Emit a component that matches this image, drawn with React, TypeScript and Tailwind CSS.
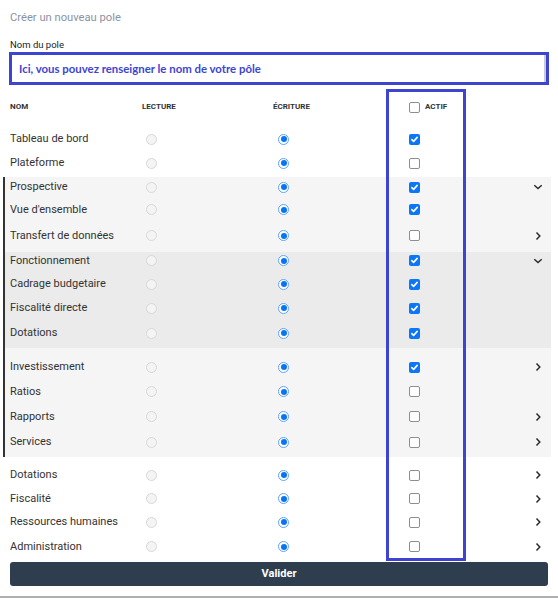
import React from "react";

type RowData = {
  name: string;
  checked: boolean;
  chev?: "right" | "down";
  h: string;
  extra?: string;
};

function Radio({ on }: { on: boolean }) {
  if (on)
    return (
      <span className="flex h-[11px] w-[11px] items-center justify-center rounded-full border-[1.5px] border-[#5fa3fa] bg-white">
        <span className="h-[6px] w-[6px] rounded-full bg-[#0a73f2]" />
      </span>
    );
  return <span className="block h-[11px] w-[11px] rounded-full border border-[#d8d8d8] bg-[#f4f4f4]" />;
}

function Check({ on }: { on: boolean }) {
  if (on)
    return (
      <span className="flex h-[11px] w-[11px] items-center justify-center rounded-[2px] bg-[#0b76f6]">
        <svg width="9" height="9" viewBox="0 0 9 9">
          <polyline points="1.8,4.6 3.6,6.4 7.2,2.4" fill="none" stroke="white" strokeWidth="1.6" strokeLinecap="round" strokeLinejoin="round" />
        </svg>
      </span>
    );
  return <span className="block h-[11px] w-[11px] rounded-[2px] border border-[#8e8e8e] bg-white" />;
}

function Chevron({ dir }: { dir: "right" | "down" }) {
  return (
    <svg width="10" height="10" viewBox="0 0 10 10">
      {dir === "right" ? (
        <polyline points="3.5,1.5 6.8,5 3.5,8.5" fill="none" stroke="#2b2b2b" strokeWidth="1.5" />
      ) : (
        <polyline points="1.3,3.3 5,6.6 8.7,3.3" fill="none" stroke="#2b2b2b" strokeWidth="1.5" />
      )}
    </svg>
  );
}

function Row({ r, inGroup }: { r: RowData; inGroup?: boolean }) {
  return (
    <div className={`flex items-center ${r.h} ${r.extra ?? ""} ${inGroup ? "pl-[5px]" : "pl-[10px]"}`}>
      <div className="w-[136px] text-[11px] leading-4 text-[#333]">{r.name}</div>
      <div className="w-[132px]">
        <Radio on={false} />
      </div>
      <div className="w-[131px]">
        <Radio on={true} />
      </div>
      <div className="w-[124px]">
        <Check on={r.checked} />
      </div>
      <div className="flex w-[10px] items-center">{r.chev && <Chevron dir={r.chev} />}</div>
    </div>
  );
}

export default function App() {
  const top: RowData[] = [
    { name: "Tableau de bord", checked: true, h: "h-[24px]" },
    { name: "Plateforme", checked: false, h: "h-[24px]" },
  ];
  const groupA: RowData[] = [
    { name: "Prospective", checked: true, chev: "down", h: "h-[20px]" },
    { name: "Vue d'ensemble", checked: true, h: "h-[25px]" },
    { name: "Transfert de données", checked: false, chev: "right", h: "h-[30px]", extra: "pb-[3px]" },
  ];
  const sub: RowData[] = [
    { name: "Fonctionnement", checked: true, chev: "down", h: "h-[20px]", extra: "pb-[3px]" },
    { name: "Cadrage budgetaire", checked: true, h: "h-[24px]" },
    { name: "Fiscalité directe", checked: true, h: "h-[24px]" },
    { name: "Dotations", checked: true, h: "h-[26px]" },
  ];
  const groupB: RowData[] = [
    { name: "Investissement", checked: true, chev: "right", h: "h-[24px]" },
    { name: "Ratios", checked: false, h: "h-[25px]" },
    { name: "Rapports", checked: false, chev: "right", h: "h-[25px]" },
    { name: "Services", checked: false, chev: "right", h: "h-[26px]" },
  ];
  const bottom: RowData[] = [
    { name: "Dotations", checked: false, chev: "right", h: "h-[24px]" },
    { name: "Fiscalité", checked: false, chev: "right", h: "h-[23px]" },
    { name: "Ressources humaines", checked: false, chev: "right", h: "h-[24px]" },
    { name: "Administration", checked: false, chev: "right", h: "h-[25px]" },
  ];

  return (
    <div className="relative h-[599px] w-[558px] overflow-hidden bg-white font-['Roboto',sans-serif]">
      <div className="pl-[10px] pt-[10px] text-[11.2px] leading-4 text-[#8a93a3]">Créer un nouveau pole</div>
      <div className="mt-[12px] pl-[10px] text-[9.5px] leading-[14px] text-[#222]">Nom du pole</div>
      <div className="mx-[9px] flex h-[33px] items-center border-[3px] border-[#3d45d0] bg-white">
        <div className="flex h-full flex-1 items-center border-r-2 border-[#c9cad6] pl-[7px] font-['Lato',sans-serif] text-[11.4px] font-bold text-[#3d45d0]">
          Ici, vous pouvez renseigner le nom de votre pôle
        </div>
      </div>

      <div className="mt-[12px] flex h-[20px] items-center pl-[10px] text-[8px] font-bold text-[#333]">
        <div className="w-[132px]">NOM</div>
        <div className="w-[131px]">LECTURE</div>
        <div className="w-[136px]">ÉCRITURE</div>
        <div className="flex items-center gap-[5px]">
          <Check on={false} />
          <span>ACTIF</span>
        </div>
      </div>

      <div className="mt-[10px]">
        {top.map((r, i) => (
          <Row key={i} r={r} />
        ))}
      </div>

      <div className="ml-[3px] mr-[7px] mt-[2px] border-l-2 border-[#333] bg-[#f5f5f5]">
        {groupA.map((r, i) => (
          <Row key={i} r={r} inGroup />
        ))}
        <div className="bg-[#ebebeb] pb-[2px]">
          {sub.map((r, i) => (
            <Row key={i} r={r} inGroup />
          ))}
        </div>
        <div className="pb-[2px] pt-[7px]">
          {groupB.map((r, i) => (
            <Row key={i} r={r} inGroup />
          ))}
        </div>
      </div>

      <div className="mt-[6px]">
        {bottom.map((r, i) => (
          <Row key={i} r={r} />
        ))}
      </div>

      <div className="mx-[10px] mt-[3px] flex h-[24px] items-center justify-center rounded-[3px] bg-[#2e3e4f] text-[11px] font-bold text-white">
        Valider
      </div>

      <div className="absolute bottom-[1px] left-0 h-[2px] w-full bg-[#b0b0b0]" />

      <div className="pointer-events-none absolute left-[386px] top-[89px] h-[472px] w-[80px] border-[3px] border-[#3d45d0]" />
    </div>
  );
}
